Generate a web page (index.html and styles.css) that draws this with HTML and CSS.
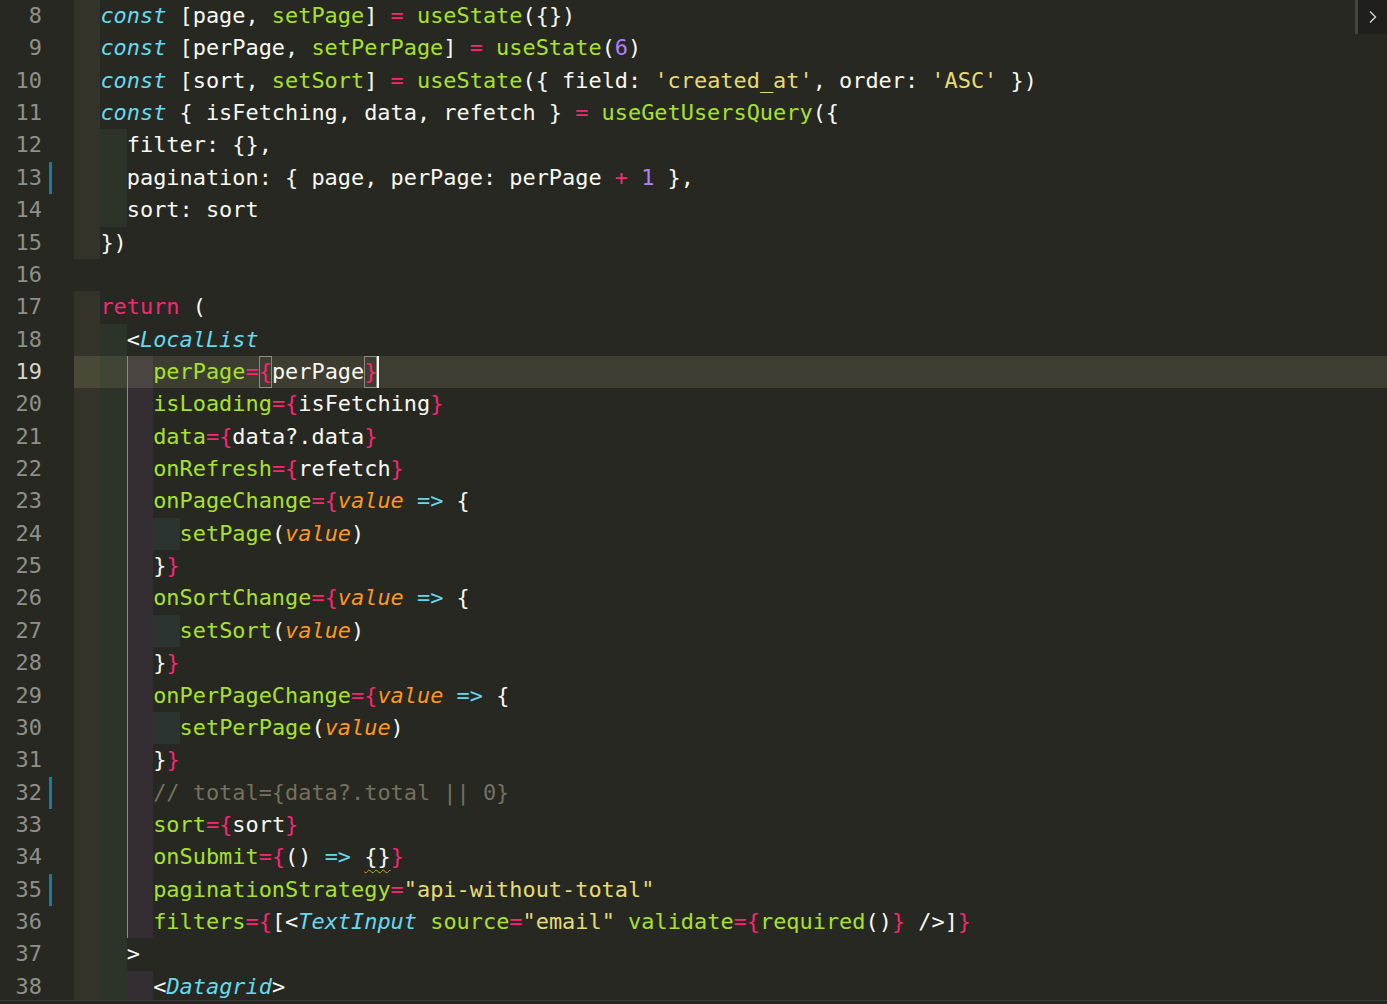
FILE: index.html
```html
<!DOCTYPE html>
<html lang="en">
<head>
    <meta charset="UTF-8">
    <meta name="viewport" content="width=device-width, initial-scale=1.0">
    <title>UsersList.jsx</title>
    <link rel="stylesheet" href="styles.css">
</head>
<body>
    <div class="editor">
        <div class="ln"><span class="gut">8</span><span class="code"><span class="i1">  </span><span class="k">const</span> [page, <span class="f">setPage</span>] <span class="o">=</span> <span class="f">useState</span>({})</span></div>
        <div class="ln"><span class="gut">9</span><span class="code"><span class="i1">  </span><span class="k">const</span> [perPage, <span class="f">setPerPage</span>] <span class="o">=</span> <span class="f">useState</span>(<span class="n">6</span>)</span></div>
        <div class="ln"><span class="gut">10</span><span class="code"><span class="i1">  </span><span class="k">const</span> [sort, <span class="f">setSort</span>] <span class="o">=</span> <span class="f">useState</span>({ field: <span class="s">'created_at'</span>, order: <span class="s">'ASC'</span> })</span></div>
        <div class="ln"><span class="gut">11</span><span class="code"><span class="i1">  </span><span class="k">const</span> { isFetching, data, refetch } <span class="o">=</span> <span class="f">useGetUsersQuery</span>({</span></div>
        <div class="ln"><span class="gut">12</span><span class="code"><span class="i1">  </span><span class="i2">  </span>filter: {},</span></div>
        <div class="ln changed"><span class="gut">13</span><span class="code"><span class="i1">  </span><span class="i2">  </span>pagination: { page, perPage: perPage <span class="o">+</span> <span class="n">1</span> },</span></div>
        <div class="ln"><span class="gut">14</span><span class="code"><span class="i1">  </span><span class="i2">  </span>sort: sort</span></div>
        <div class="ln"><span class="gut">15</span><span class="code"><span class="i1">  </span>})</span></div>
        <div class="ln"><span class="gut">16</span><span class="code"></span></div>
        <div class="ln"><span class="gut">17</span><span class="code"><span class="i1">  </span><span class="o">return</span> (</span></div>
        <div class="ln"><span class="gut">18</span><span class="code"><span class="i1">  </span><span class="i2">  </span>&lt;<span class="t">LocalList</span></span></div>
        <div class="ln current"><span class="gut">19</span><span class="code"><span class="i1">  </span><span class="i2">  </span><span class="i3 guide">  </span><span class="f">perPage</span><span class="o">=</span><span class="o match">{</span>perPage<span class="o match">}</span><span class="cursor"></span></span></div>
        <div class="ln"><span class="gut">20</span><span class="code"><span class="i1">  </span><span class="i2">  </span><span class="i3 guide">  </span><span class="f">isLoading</span><span class="o">={</span>isFetching<span class="o">}</span></span></div>
        <div class="ln"><span class="gut">21</span><span class="code"><span class="i1">  </span><span class="i2">  </span><span class="i3 guide">  </span><span class="f">data</span><span class="o">={</span>data?.data<span class="o">}</span></span></div>
        <div class="ln"><span class="gut">22</span><span class="code"><span class="i1">  </span><span class="i2">  </span><span class="i3 guide">  </span><span class="f">onRefresh</span><span class="o">={</span>refetch<span class="o">}</span></span></div>
        <div class="ln"><span class="gut">23</span><span class="code"><span class="i1">  </span><span class="i2">  </span><span class="i3 guide">  </span><span class="f">onPageChange</span><span class="o">={</span><span class="p">value</span> <span class="a">=&gt;</span> {</span></div>
        <div class="ln"><span class="gut">24</span><span class="code"><span class="i1">  </span><span class="i2">  </span><span class="i3 guide">  </span><span class="i4">  </span><span class="f">setPage</span>(<span class="p">value</span>)</span></div>
        <div class="ln"><span class="gut">25</span><span class="code"><span class="i1">  </span><span class="i2">  </span><span class="i3 guide">  </span>}<span class="o">}</span></span></div>
        <div class="ln"><span class="gut">26</span><span class="code"><span class="i1">  </span><span class="i2">  </span><span class="i3 guide">  </span><span class="f">onSortChange</span><span class="o">={</span><span class="p">value</span> <span class="a">=&gt;</span> {</span></div>
        <div class="ln"><span class="gut">27</span><span class="code"><span class="i1">  </span><span class="i2">  </span><span class="i3 guide">  </span><span class="i4">  </span><span class="f">setSort</span>(<span class="p">value</span>)</span></div>
        <div class="ln"><span class="gut">28</span><span class="code"><span class="i1">  </span><span class="i2">  </span><span class="i3 guide">  </span>}<span class="o">}</span></span></div>
        <div class="ln"><span class="gut">29</span><span class="code"><span class="i1">  </span><span class="i2">  </span><span class="i3 guide">  </span><span class="f">onPerPageChange</span><span class="o">={</span><span class="p">value</span> <span class="a">=&gt;</span> {</span></div>
        <div class="ln"><span class="gut">30</span><span class="code"><span class="i1">  </span><span class="i2">  </span><span class="i3 guide">  </span><span class="i4">  </span><span class="f">setPerPage</span>(<span class="p">value</span>)</span></div>
        <div class="ln"><span class="gut">31</span><span class="code"><span class="i1">  </span><span class="i2">  </span><span class="i3 guide">  </span>}<span class="o">}</span></span></div>
        <div class="ln changed"><span class="gut">32</span><span class="code"><span class="i1">  </span><span class="i2">  </span><span class="i3 guide">  </span><span class="c">// total={data?.total || 0}</span></span></div>
        <div class="ln"><span class="gut">33</span><span class="code"><span class="i1">  </span><span class="i2">  </span><span class="i3 guide">  </span><span class="f">sort</span><span class="o">={</span>sort<span class="o">}</span></span></div>
        <div class="ln"><span class="gut">34</span><span class="code"><span class="i1">  </span><span class="i2">  </span><span class="i3 guide">  </span><span class="f">onSubmit</span><span class="o">={</span>() <span class="a">=&gt;</span> <span class="warn">{}</span><span class="o">}</span></span></div>
        <div class="ln changed"><span class="gut">35</span><span class="code"><span class="i1">  </span><span class="i2">  </span><span class="i3 guide">  </span><span class="f">paginationStrategy</span><span class="o">=</span><span class="s">"api-without-total"</span></span></div>
        <div class="ln"><span class="gut">36</span><span class="code"><span class="i1">  </span><span class="i2">  </span><span class="i3 guide">  </span><span class="f">filters</span><span class="o">={</span>[&lt;<span class="t">TextInput</span> <span class="f">source</span><span class="o">=</span><span class="s">"email"</span> <span class="f">validate</span><span class="o">={</span><span class="f">required</span>()<span class="o">}</span> /&gt;]<span class="o">}</span></span></div>
        <div class="ln"><span class="gut">37</span><span class="code"><span class="i1">  </span><span class="i2">  </span>&gt;</span></div>
        <div class="ln"><span class="gut">38</span><span class="code"><span class="i1">  </span><span class="i2">  </span><span class="i3">  </span>&lt;<span class="t">Datagrid</span>&gt;</span></div>
    </div>
    <div class="statusline"></div>

    <!-- minimap toggle -->
    <div class="map-toggle">
        <svg width="10" height="14" viewBox="0 0 10 14"><path d="M2 1.5 L7.5 7 L2 12.5" fill="none" stroke="#d6d6d0" stroke-width="1.4"/></svg>
    </div>
</body>
</html>
```

FILE: styles.css
```css
body {
    margin: 0;
    padding: 0;
    background: #272822;
    color: #f8f8f2;
    font-family: 'DejaVu Sans Mono', 'Liberation Mono', monospace;
    font-size: 21.92px;
    overflow: hidden;
}

.editor {
    height: 1000px;
    overflow: hidden;
}

.ln {
    display: flex;
    height: 32.37px;
    line-height: 32.37px;
    white-space: pre;
}

.gut {
    width: 42px;
    padding-right: 32px;
    flex-shrink: 0;
    text-align: right;
    color: #90908a;
}

.ln.changed .gut {
    background: linear-gradient(to right, transparent 49px, #1b7ca3 49px, #1b7ca3 52px, transparent 52px);
}

.code {
    flex: 1;
}

.ln.current .code {
    background: #3e3d32;
}

.ln.current .gut {
    color: #d4d4ce;
}

/* indent rainbow */
.i1, .i2, .i3, .i4 {
    display: inline-block;
    height: 32.37px;
    vertical-align: top;
}

.i1 { background: #33332a; }
.i2 { background: #2c3429; }
.i3 { background: #352d34; }
.i4 { background: #2b3430; }

.i3.guide {
    box-shadow: inset 1px 0 0 #8d8b88;
}

.ln.current .i1 { background: #4a4836; }
.ln.current .i2 { background: #414536; }
.ln.current .i3 { background: #4a4443; }

/* monokai */
.k { color: #66d9ef; font-style: italic; }
.t { color: #66d9ef; font-style: italic; }
.f { color: #a6e22e; }
.o { color: #f92672; }
.n { color: #ae81ff; }
.s { color: #e6db74; }
.p { color: #fd971f; font-style: italic; }
.a { color: #66d9ef; }
.c { color: #75715e; }

.match {
    display: inline-block;
    height: 32.37px;
    vertical-align: top;
    box-shadow: inset 0 0 0 1px #8a8983;
}

.cursor {
    display: inline-block;
    width: 0;
    height: 32px;
    vertical-align: top;
    border-left: 2px solid #f8f8f0;
}

.warn {
    text-decoration: underline wavy #c9a42a;
    text-decoration-thickness: 1px;
    text-underline-offset: 5px;
}

.statusline {
    height: 3px;
    border-top: 1px solid #3c3c37;
    background: #262722;
}

.map-toggle {
    position: absolute;
    top: 0;
    right: 0;
    width: 29px;
    height: 34px;
    background: #1e1f1b;
    border-left: 3px solid #45453f;
    display: flex;
    align-items: center;
    justify-content: center;
}
```
